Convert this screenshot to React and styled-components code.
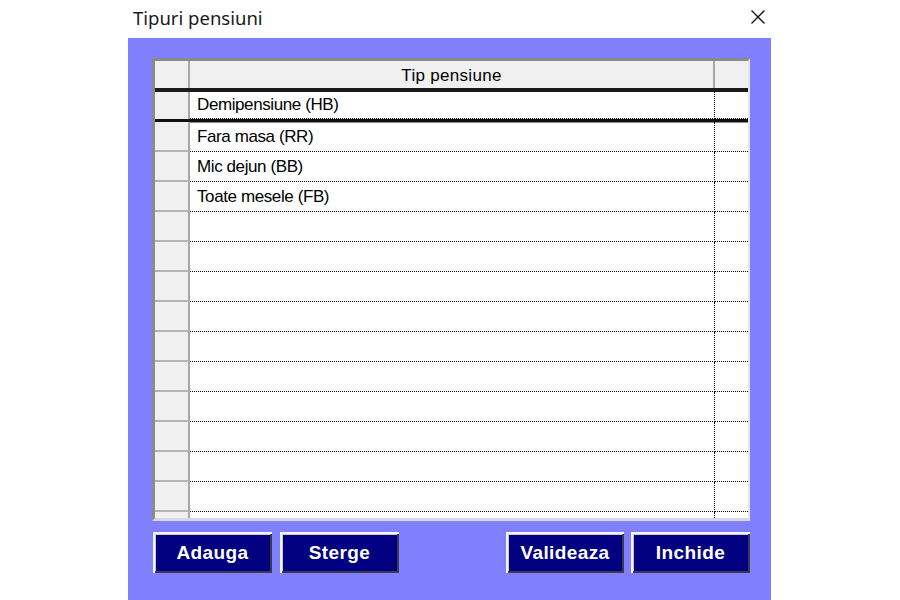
import React from "react";
import styled, { createGlobalStyle } from "styled-components";

const Global = createGlobalStyle`
  html, body { margin: 0; padding: 0; background: #ffffff; }
  body { font-family: "Liberation Sans", Arial, sans-serif; }
`;

const Page = styled.div`
  width: 900px;
  height: 600px;
  display: flex;
  flex-direction: column;
  overflow: hidden;
`;

const TitleBar = styled.div`
  height: 38px;
  display: flex;
  align-items: center;
  padding-left: 133px;
  padding-right: 134px;
  box-sizing: border-box;
`;

const Title = styled.div`
  flex: 1;
  font-family: "Noto Sans", "Open Sans", sans-serif;
  font-size: 18.5px;
  color: #1a1a1a;
  margin-top: -4px;
`;

const Close = styled.button`
  width: 16px;
  height: 16px;
  padding: 0;
  border: 0;
  background: transparent;
  display: flex;
  margin-top: -4px;
`;

const Panel = styled.div`
  margin-left: 128px;
  width: 643px;
  flex: 1;
  background: #8080ff;
  padding: 20px 21px 0 24px;
  box-sizing: border-box;
  display: flex;
  flex-direction: column;
  gap: 11px;
`;

const Grid = styled.div`
  height: 463px;
  box-sizing: border-box;
  background: #ffffff;
  border-top: 3px solid #8a8a8a;
  border-left: 3px solid #8a8a8a;
  border-right: 2px solid #e6e6e6;
  border-bottom: 3px solid #d8d8d8;
  box-shadow: inset 1px 1px 0 #5a5a5a;
  overflow: hidden;
`;

const Row = styled.div`
  display: grid;
  grid-template-columns: 35px 525px 1fr;
  height: 30px;
  box-sizing: border-box;
  border-bottom: ${(p) => (p.$thick ? "3px solid #111" : "none")};
  box-shadow: ${(p) => (p.$thick ? "0 1px 0 #8a8a8a" : "none")};
`;

const Header = styled(Row)`
  height: 31px;
  border-bottom: 4px solid #1a1a1a;
  box-shadow: inset 0 -2px 0 #8a8a8a;
`;

const RowHead = styled.div`
  background: #f0f0f0;
  border-right: 2px solid #a8a8a8;
  border-bottom: ${(p) => (p.$plain ? "none" : "2px solid #b4b4b4")};
  box-sizing: border-box;
`;

const HeadCell = styled.div`
  background: #f0f0f0;
  border-right: ${(p) => (p.$last ? "none" : "2px solid #a8a8a8")};
  font-size: 17px;
  letter-spacing: 0.3px;
  color: #000;
  display: flex;
  align-items: center;
  justify-content: center;
  padding-top: 2px;
`;

const Cell = styled.div`
  box-sizing: border-box;
  border-bottom: 1px dotted #000;
  border-right: ${(p) => (p.$last ? "none" : "1px dotted #000")};
  font-size: 17px;
  color: #000;
  padding-left: 7px;
  display: flex;
  align-items: center;
  white-space: nowrap;
  letter-spacing: -0.4px;
`;

const Buttons = styled.div`
  display: flex;
  padding-left: 1px;
`;

const Group = styled.div`
  display: flex;
  gap: ${(p) => p.$gap}px;
  margin-left: ${(p) => (p.$right ? "auto" : "0")};
`;

const Btn = styled.button`
  width: ${(p) => p.$w}px;
  height: 41px;
  background: #000080;
  color: #ffffff;
  font-family: "Liberation Sans", Arial, sans-serif;
  font-weight: bold;
  font-size: 19px;
  letter-spacing: 0.4px;
  border: 0;
  padding: 0;
  box-shadow: inset 2px 2px 0 #f4f4f4, inset -2px -2px 0 #3a3a4a,
    inset 3px 3px 0 #c8c8d8;
  cursor: default;
`;

const rows = [
  "Demipensiune (HB)",
  "Fara masa (RR)",
  "Mic dejun (BB)",
  "Toate mesele (FB)",
  "", "", "", "", "", "", "", "", "", "", "", "",
];

export default function App() {
  return (
    <Page>
      <Global />
      <TitleBar>
        <Title>Tipuri pensiuni</Title>
        <Close aria-label="close">
          <svg width="16" height="16" viewBox="0 0 16 16">
            <path d="M1.5 1.5 L14.5 14.5 M14.5 1.5 L1.5 14.5" stroke="#111" strokeWidth="1.3" />
          </svg>
        </Close>
      </TitleBar>
      <Panel>
        <Grid>
          <Header>
            <RowHead $plain />
            <HeadCell>Tip pensiune</HeadCell>
            <HeadCell $last />
          </Header>
          {rows.map((r, i) => (
            <Row key={i} $thick={i === 0}>
              <RowHead $plain={i === 0} />
              <Cell>{r}</Cell>
              <Cell $last />
            </Row>
          ))}
        </Grid>
        <Buttons>
          <Group $gap={8}>
            <Btn $w={119}>Adauga</Btn>
            <Btn $w={119}>Sterge</Btn>
          </Group>
          <Group $gap={7} $right>
            <Btn $w={118}>Valideaza</Btn>
            <Btn $w={119}>Inchide</Btn>
          </Group>
        </Buttons>
      </Panel>
    </Page>
  );
}
